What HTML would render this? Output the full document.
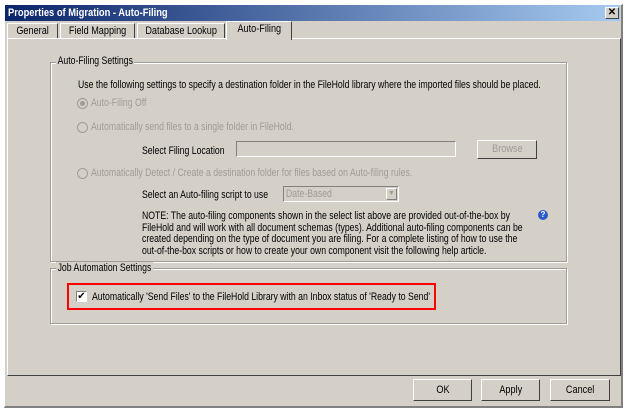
<!DOCTYPE html>
<html><head><style>
*{margin:0;padding:0;box-sizing:border-box}
body{width:628px;height:414px;background:#fff;position:relative;overflow:hidden;font-family:"Liberation Sans",sans-serif;font-size:11px;color:#000}
.a{position:absolute;white-space:nowrap}
.s{transform:scaleX(0.79);transform-origin:0 0}
.win{left:4px;top:4px;width:619px;height:404px;background:#d4d0c8;border-right:2px solid #808080;border-bottom:2px solid #808080;border-left:1px solid #fff;border-top:1px solid #fff}
.title{left:5px;top:5px;width:615px;height:16px;background:linear-gradient(90deg,#0a246a,#a6caf0)}
.x{left:605px;top:7px;width:14px;height:12px;background:#d4d0c8;border:1px solid;border-color:#fff #404040 #404040 #fff;font-size:10px;font-weight:bold;line-height:10px;text-align:center}
.tab{top:23px;height:16px;border:1px solid;border-color:#fff #404040 transparent #fff;line-height:14px;background:#d4d0c8}
.tab span{display:inline-block;transform:scaleX(0.83);transform-origin:50% 0}
.panel{left:7px;top:38px;width:614px;height:338px;border:1px solid;border-color:#fff #404040 #404040 #fff}
.grp{border:1px solid #a09c94;box-shadow:1px 1px 0 #fff inset,1px 1px 0 #fff}
.dis{color:#a09c94}
.rad{width:11px;height:11px;border-radius:50%;border:1px solid #a09c94;background:#d4d0c8}
.btn{height:22px;border:1px solid;border-color:#fff #404040 #404040 #fff;text-align:center;line-height:20px;background:#d4d0c8}
.btn span{display:inline-block;transform:scaleX(0.83)}
</style></head><body>
<div class="a win"></div>
<div class="a title"></div>
<div class="a s" style="left:8px;top:7px;color:#fff;font-weight:bold;transform:scaleX(0.85)">Properties of Migration - Auto-Filing</div>
<div class="a x">✕</div>
<div class="a tab" style="left:7px;width:51px;text-align:center"><span>General</span></div>
<div class="a tab" style="left:60px;width:75px;text-align:center"><span>Field Mapping</span></div>
<div class="a tab" style="left:137px;width:88px;text-align:center"><span>Database Lookup</span></div>
<div class="a tab" style="left:226px;top:21px;height:19px;width:66px;border-bottom:none;z-index:2;text-align:center"><span>Auto-Filing</span></div>
<div class="a panel"></div>

<div class="a grp" style="left:50px;top:62px;width:517px;height:200px"></div>
<div class="a s" style="left:56px;top:55px;background:#d4d0c8;padding:0 2px">Auto-Filing Settings</div>
<div class="a s" style="left:78px;top:79px">Use the following settings to specify a destination folder in the FileHold library where the imported files should be placed.</div>
<div class="a rad" style="left:77px;top:98px"></div><div class="a" style="left:80px;top:101px;width:5px;height:5px;border-radius:50%;background:#a09c94"></div>
<div class="a dis s" style="left:91px;top:97px">Auto-Filing Off</div>
<div class="a rad" style="left:77px;top:122px"></div>
<div class="a dis s" style="left:91px;top:121px">Automatically send files to a single folder in FileHold.</div>
<div class="a s" style="left:142px;top:145px">Select Filing Location</div>
<div class="a" style="left:236px;top:141px;width:220px;height:16px;border:1px solid;border-color:#808080 #fff #fff #808080"></div>
<div class="a btn dis" style="left:477px;top:140px;width:60px;height:19px;line-height:17px"><span>Browse</span></div>
<div class="a rad" style="left:77px;top:168px"></div>
<div class="a dis s" style="left:91px;top:167px">Automatically Detect / Create a destination folder for files based on Auto-filing rules.</div>
<div class="a s" style="left:142px;top:189px">Select an Auto-filing script to use</div>
<div class="a dis" style="left:283px;top:186px;width:116px;height:16px;border:1px solid;border-color:#808080 #fff #fff #808080;padding-left:2px;line-height:14px"><span style="display:inline-block;transform:scaleX(0.79);transform-origin:0 0">Date-Based</span></div>
<div class="a" style="left:386px;top:188px;width:11px;height:12px;border:1px solid;border-color:#fff #808080 #808080 #fff;font-size:7px;color:#a09c94;text-align:center;line-height:10px">▼</div>
<div class="a s" style="left:142px;top:211px;line-height:11.5px">NOTE: The auto-filing components shown in the select list above are provided out-of-the-box by<br>FileHold and will work with all document schemas (types). Additional auto-filing components can be<br>created depending on the type of document you are filing. For a complete listing of how to use the<br>out-of-the-box scripts or how to create your own component visit the following help article.</div>
<div class="a" style="left:538px;top:210px;width:10px;height:10px;border-radius:50%;background:#2a5bc8;color:#fff;font-size:8px;font-weight:bold;text-align:center;line-height:10px">?</div>

<div class="a grp" style="left:50px;top:268px;width:517px;height:56px"></div>
<div class="a s" style="left:56px;top:262px;background:#d4d0c8;padding:0 2px">Job Automation Settings</div>
<div class="a" style="left:67px;top:283px;width:369px;height:27px;border:2px solid #f00"></div>
<div class="a" style="left:76px;top:291px;width:11px;height:11px;background:#fff;border:1px solid;border-color:#808080 #fff #fff #808080;font-size:10px;line-height:9px;text-align:center">✔</div>
<div class="a s" style="left:92px;top:291px">Automatically 'Send Files' to the FileHold Library with an Inbox status of 'Ready to Send'</div>

<div class="a btn" style="left:413px;top:379px;width:59px"><span>OK</span></div>
<div class="a btn" style="left:481px;top:379px;width:59px"><span>Apply</span></div>
<div class="a btn" style="left:550px;top:379px;width:60px"><span>Cancel</span></div>
</body></html>
